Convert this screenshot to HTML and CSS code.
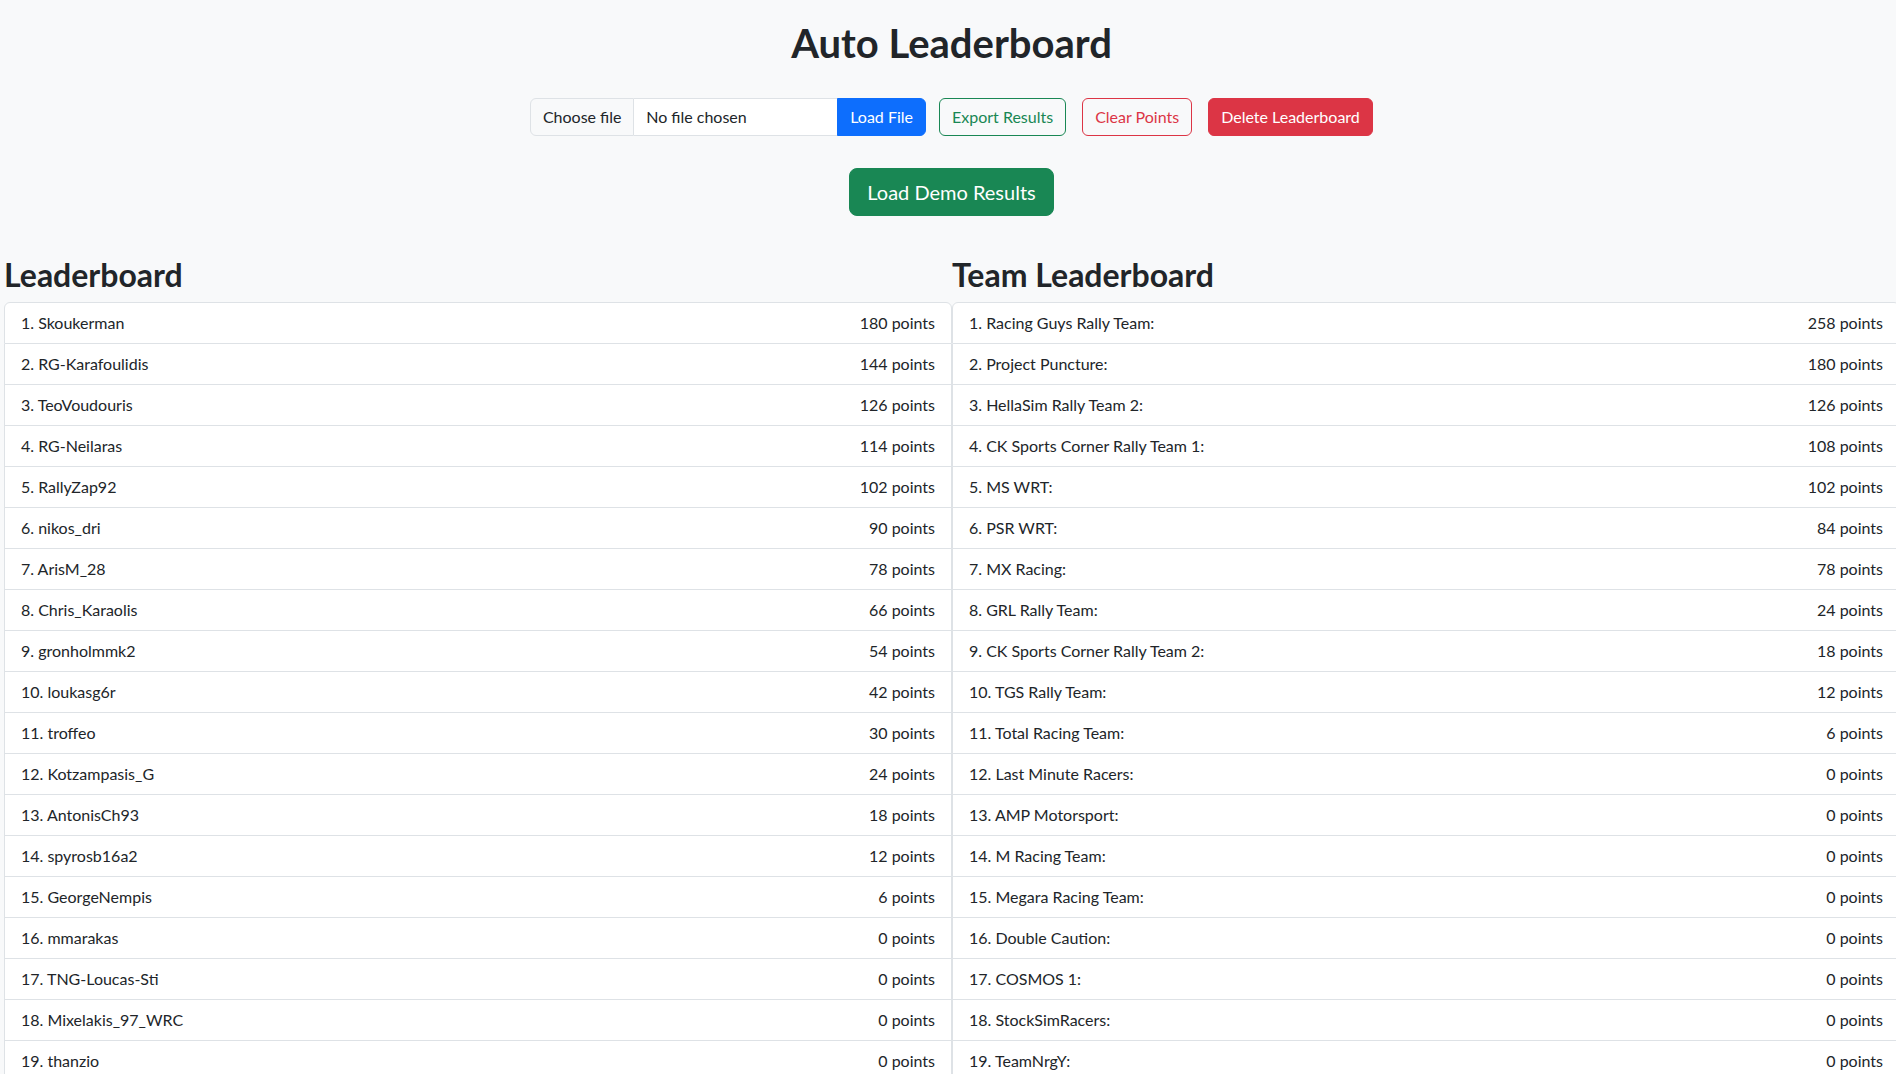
FILE: index.html
```html
<!DOCTYPE html>
<html lang="en">
<head>
<meta charset="utf-8">
<title>Auto Leaderboard</title>
<link rel="stylesheet" href="styles.css">
</head>
<body>
<header class="top">
  <h1 class="title">Auto Leaderboard</h1>
  <div class="controls">
    <div class="file-group">
      <span class="file-btn">Choose file</span>
      <span class="file-name">No file chosen</span>
      <button class="btn btn-primary btn-attached">Load File</button>
    </div>
    <button class="btn btn-outline-success ml-13">Export Results</button>
    <button class="btn btn-outline-danger ml-16">Clear Points</button>
    <button class="btn btn-danger ml-16">Delete Leaderboard</button>
  </div>
  <div class="demo-row">
    <button class="btn btn-success btn-lg">Load Demo Results</button>
  </div>
</header>
<main class="boards">
  <section class="board">
    <h2 class="board-title">Leaderboard</h2>
    <ul class="list">
      <li class="item"><span>1. Skoukerman</span><span>180 points</span></li>
      <li class="item"><span>2. RG-Karafoulidis</span><span>144 points</span></li>
      <li class="item"><span>3. TeoVoudouris</span><span>126 points</span></li>
      <li class="item"><span>4. RG-Neilaras</span><span>114 points</span></li>
      <li class="item"><span>5. RallyZap92</span><span>102 points</span></li>
      <li class="item"><span>6. nikos_dri</span><span>90 points</span></li>
      <li class="item"><span>7. ArisM_28</span><span>78 points</span></li>
      <li class="item"><span>8. Chris_Karaolis</span><span>66 points</span></li>
      <li class="item"><span>9. gronholmmk2</span><span>54 points</span></li>
      <li class="item"><span>10. loukasg6r</span><span>42 points</span></li>
      <li class="item"><span>11. troffeo</span><span>30 points</span></li>
      <li class="item"><span>12. Kotzampasis_G</span><span>24 points</span></li>
      <li class="item"><span>13. AntonisCh93</span><span>18 points</span></li>
      <li class="item"><span>14. spyrosb16a2</span><span>12 points</span></li>
      <li class="item"><span>15. GeorgeNempis</span><span>6 points</span></li>
      <li class="item"><span>16. mmarakas</span><span>0 points</span></li>
      <li class="item"><span>17. TNG-Loucas-Sti</span><span>0 points</span></li>
      <li class="item"><span>18. Mixelakis_97_WRC</span><span>0 points</span></li>
      <li class="item"><span>19. thanzio</span><span>0 points</span></li>
    </ul>
  </section>
  <section class="board">
    <h2 class="board-title">Team Leaderboard</h2>
    <ul class="list">
      <li class="item"><span>1. Racing Guys Rally Team:</span><span>258 points</span></li>
      <li class="item"><span>2. Project Puncture:</span><span>180 points</span></li>
      <li class="item"><span>3. HellaSim Rally Team 2:</span><span>126 points</span></li>
      <li class="item"><span>4. CK Sports Corner Rally Team 1:</span><span>108 points</span></li>
      <li class="item"><span>5. MS WRT:</span><span>102 points</span></li>
      <li class="item"><span>6. PSR WRT:</span><span>84 points</span></li>
      <li class="item"><span>7. MX Racing:</span><span>78 points</span></li>
      <li class="item"><span>8. GRL Rally Team:</span><span>24 points</span></li>
      <li class="item"><span>9. CK Sports Corner Rally Team 2:</span><span>18 points</span></li>
      <li class="item"><span>10. TGS Rally Team:</span><span>12 points</span></li>
      <li class="item"><span>11. Total Racing Team:</span><span>6 points</span></li>
      <li class="item"><span>12. Last Minute Racers:</span><span>0 points</span></li>
      <li class="item"><span>13. AMP Motorsport:</span><span>0 points</span></li>
      <li class="item"><span>14. M Racing Team:</span><span>0 points</span></li>
      <li class="item"><span>15. Megara Racing Team:</span><span>0 points</span></li>
      <li class="item"><span>16. Double Caution:</span><span>0 points</span></li>
      <li class="item"><span>17. COSMOS 1:</span><span>0 points</span></li>
      <li class="item"><span>18. StockSimRacers:</span><span>0 points</span></li>
      <li class="item"><span>19. TeamNrgY:</span><span>0 points</span></li>
    </ul>
  </section>
</main>
</body>
</html>
```
FILE: styles.css
```css
html {
  scrollbar-width: none;
}
html::-webkit-scrollbar {
  display: none;
}
body {
  margin: 0;
  background: #f8f9fa;
  color: #212529;
  font-family: "Lato", "Noto Sans", sans-serif;
  font-size: 16px;
  line-height: 24px;
  overflow-x: hidden;
}
.top {
  display: flex;
  flex-direction: column;
  align-items: center;
  padding-left: 7px;
}
.title {
  margin: 19px 0 31px;
  font-size: 40px;
  line-height: 48px;
  font-weight: 700;
}
.controls {
  display: flex;
  align-items: center;
  height: 38px;
}
.file-group {
  display: flex;
  height: 38px;
}
.file-btn {
  display: flex;
  align-items: center;
  justify-content: center;
  white-space: nowrap;
  background: #f8f9fa;
  border: 1px solid #dee2e6;
  border-radius: 6px 0 0 6px;
  width: 104px;
  box-sizing: border-box;
}
.file-name {
  display: flex;
  align-items: center;
  white-space: nowrap;
  padding: 0 12px;
  background: #fff;
  border-top: 1px solid #dee2e6;
  border-bottom: 1px solid #dee2e6;
  width: 203px;
  box-sizing: border-box;
}
.btn {
  font-family: inherit;
  font-size: 16px;
  line-height: 24px;
  padding: 6px 12px;
  border: 1px solid transparent;
  border-radius: 6px;
  cursor: pointer;
  height: 38px;
  white-space: nowrap;
}
.btn-attached {
  border-radius: 0 6px 6px 0;
}
.btn-primary {
  background: #0d6efd;
  border-color: #0d6efd;
  color: #fff;
}
.btn-outline-success {
  background: transparent;
  border-color: #198754;
  color: #198754;
}
.btn-outline-danger {
  background: transparent;
  border-color: #dc3545;
  color: #dc3545;
}
.btn-danger {
  background: #dc3545;
  border-color: #dc3545;
  color: #fff;
}
.btn-success {
  background: #198754;
  border-color: #198754;
  color: #fff;
}
.btn-lg {
  font-size: 20px;
  line-height: 30px;
  padding: 8px 17px;
  height: 48px;
  border-radius: 8px;
}
.ml-13 {
  margin-left: 13px;
}
.ml-16 {
  margin-left: 16px;
}
.demo-row {
  margin-top: 32px;
}
.boards {
  display: grid;
  grid-template-columns: 948px 948px;
  padding-left: 4px;
  margin-top: 40px;
}
.board-title {
  margin: 0 0 8px;
  font-size: 32px;
  line-height: 38px;
  font-weight: 700;
}
.list {
  list-style: none;
  margin: 0;
  padding: 0;
}
.item {
  display: flex;
  justify-content: space-between;
  padding: 8px 16px;
  background: #fff;
  border: 1px solid #dee2e6;
  border-top: 0;
}
.item:first-child {
  border-top: 1px solid #dee2e6;
  border-radius: 6px 6px 0 0;
}
```
